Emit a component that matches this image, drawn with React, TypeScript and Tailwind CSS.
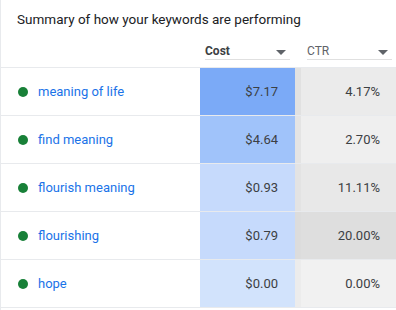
const rows = [
  { name: "meaning of life", cost: "$7.17", ctr: "4.17%", costBg: "bg-[#7baaf7]", gapBg: "bg-[#e1e1e1]", ctrBg: "bg-[#ebebeb]" },
  { name: "find meaning", cost: "$4.64", ctr: "2.70%", costBg: "bg-[#a0c3fa]", gapBg: "bg-[#e4e4e4]", ctrBg: "bg-[#efefef]" },
  { name: "flourish meaning", cost: "$0.93", ctr: "11.11%", costBg: "bg-[#c6dafc]", gapBg: "bg-[#e3e3e3]", ctrBg: "bg-[#e8e8e8]" },
  { name: "flourishing", cost: "$0.79", ctr: "20.00%", costBg: "bg-[#c6dafc]", gapBg: "bg-[#dcdcdc]", ctrBg: "bg-[#dedede]" },
  { name: "hope", cost: "$0.00", ctr: "0.00%", costBg: "bg-[#d2e3fc]", gapBg: "bg-[#ececec]", ctrBg: "bg-[#f1f1f1]" },
];

function Caret() {
  return (
    <svg width="10" height="5" viewBox="0 0 10 5" className="shrink-0 mb-[4px]">
      <path d="M0 0h10L5 5z" fill="#5f6368" />
    </svg>
  );
}

export default function App() {
  return (
    <div className="w-[396px] h-[310px] bg-white border-l border-[#e8eaed] font-['Roboto',sans-serif] overflow-hidden">
      {/* Title */}
      <div className="h-[36px] pl-4 pt-[9px]">
        <h2 className="text-[13.5px] leading-5 text-[#202124]">Summary of how your keywords are performing</h2>
      </div>

      {/* Column headers */}
      <div className="grid grid-cols-[199px_95px_6px_95px] h-[24px]">
        <div />
        <div className="flex items-end justify-between pl-[5px] pr-[5px]">
          <div className="flex w-full items-end justify-between border-b border-[#e0e0e0] h-full pr-[4px]">
            <span className="text-[12px] leading-4 font-bold text-[#3c4043]">Cost</span>
            <Caret />
          </div>
        </div>
        <div />
        <div className="flex items-end pl-[6px] pr-[4px]">
          <div className="flex w-full items-end justify-between border-b border-[#e0e0e0] h-full pr-[4px]">
            <span className="text-[12px] leading-4 text-[#5f6368]">CTR</span>
            <Caret />
          </div>
        </div>
      </div>

      {/* Table */}
      <div className="mt-[7px] border-t border-[#e8eaed]">
        {rows.map((r) => (
          <div key={r.name} className="grid grid-cols-[199px_95px_6px_95px] h-[48px] border-b border-[#e8eaed]">
            <div className="flex items-center gap-[10px] pl-[17px]">
              <span className="w-[10px] h-[10px] rounded-full bg-[#188038]" />
              <span className="text-[13px] text-[#1a73e8]">{r.name}</span>
            </div>
            <div className={`flex items-center justify-end pr-[17px] text-[13px] text-[#3c4043] ${r.costBg}`}>{r.cost}</div>
            <div className={r.gapBg} />
            <div className={`flex items-center justify-end pr-[16px] text-[13px] text-[#3c4043] ${r.ctrBg}`}>{r.ctr}</div>
          </div>
        ))}
      </div>
    </div>
  );
}
